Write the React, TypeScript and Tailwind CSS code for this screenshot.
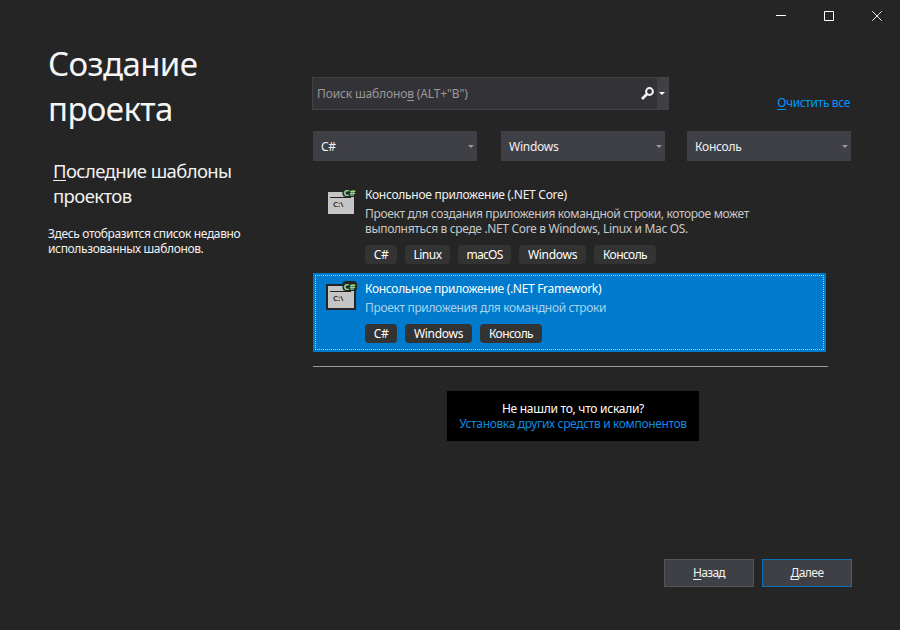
import React from "react";

function Line({ className = "", children }: { className?: string; children: React.ReactNode }) {
  return <div className={`h-[15px] leading-[15px] whitespace-nowrap ${className}`}>{children}</div>;
}

function Key({ children }: { children: React.ReactNode }) {
  return <span className="underline decoration-1 underline-offset-[1.5px]">{children}</span>;
}

function Arrow({ className = "fill-[#999999]" }: { className?: string }) {
  return (
    <svg width="6" height="3" viewBox="0 0 6 3" className={className}>
      <path d="M0 0H6L3 3Z" />
    </svg>
  );
}

function Select({ label, className = "" }: { label: string; className?: string }) {
  return (
    <button className={`flex h-[30px] w-[164px] items-center justify-between bg-[#3f3f46] pr-[3px] pl-2 tracking-[-0.25px] text-[#f1f1f1] ${className}`}>
      <span className="leading-[15px]">{label}</span>
      <Arrow />
    </button>
  );
}

function Tag({ label, className }: { label: string; className: string }) {
  return (
    <span className={`flex h-[19px] items-center justify-center rounded-[4px] leading-[15px] whitespace-nowrap text-white ${className}`}>
      {label}
    </span>
  );
}

function ConsoleIcon({ selected = false }: { selected?: boolean }) {
  return (
    <svg width="32" height="32" viewBox="0 0 32 32">
      {selected && <rect y="4" width="30" height="26" fill="#252526" />}
      <rect x="2" y="6" width="26" height="22" fill="#c5c5c5" />
      <rect x="4" y="11" width="21" height="1" fill="#252526" />
      <rect x="16.5" y="1" width="14.5" height="10" rx="3.5" fill="#252526" />
      <text x="7" y="20.5" fontSize="7.7" fontWeight="600" fontFamily="Noto Sans, sans-serif" fill="#252526" textLength="10.3" lengthAdjust="spacingAndGlyphs">C:\</text>
      <text x="17.5" y="10" fontSize="9.5" fontWeight="800" fontFamily="Noto Sans, sans-serif" fill="#8fd68f" textLength="12" lengthAdjust="spacingAndGlyphs">C#</text>
    </svg>
  );
}

export default function App() {
  return (
    <div className="flex h-[630px] w-[900px] flex-col overflow-hidden bg-[#252526] font-['Noto_Sans','Open_Sans',sans-serif] text-[12px] text-[#f1f1f1]">
      <header className="flex h-8 justify-end">
        <button className="flex w-12 items-center justify-center">
          <svg width="10" height="10" viewBox="0 0 10 10"><path d="M0 4.5H10" stroke="#fff" /></svg>
        </button>
        <button className="flex w-12 items-center justify-center">
          <svg width="10" height="10" viewBox="0 0 10 10"><path d="M.5 .5H9.5V9.5H.5Z" stroke="#fff" fill="none" /></svg>
        </button>
        <button className="flex w-[47px] items-center justify-center pl-px">
          <svg width="10" height="10" viewBox="0 0 10 10"><path d="M.3 .3L9.7 9.7M9.7 .3L.3 9.7" stroke="#e8e8e8" /></svg>
        </button>
      </header>

      <div className="flex flex-1">
        <aside className="w-[312px] pt-[9px] pl-12">
          <h1 className="text-[33px] leading-[45px] tracking-[-0.6px] text-[#f5f5f5]">
            <div>Создание</div>
            <div>проекта</div>
          </h1>
          <h2 className="mt-[27px] ml-[5px] text-[18.5px] leading-[25px] tracking-[-0.6px]">
            <div><Key>П</Key>оследние шаблоны</div>
            <div>проектов</div>
          </h2>
          <div className="mt-[18px] tracking-[-0.36px]">
            <Line>Здесь отобразится список недавно</Line>
            <Line>использованных шаблонов.</Line>
          </div>
        </aside>

        <main className="flex w-[540px] flex-col pt-[45px]">
          <div className="flex h-[33px] justify-between">
            <div className="flex w-[357px] border border-[#434346] bg-[#333337]">
              <div className="flex flex-1 items-center justify-between pr-[3px] pl-1">
                <Line className="tracking-[-0.14px] text-[#999999]">Поиск шаблоно<Key>в</Key> (ALT+"B")</Line>
                <svg width="13" height="13" viewBox="0 0 13 13" fill="none" stroke="#f5f5f5">
                  <circle cx="8.5" cy="4.5" r="3.4" strokeWidth="2" />
                  <path d="M6 7L1 12" strokeWidth="2.6" />
                </svg>
              </div>
              <div className="flex w-[11px] items-center justify-center bg-[#3f3f46] pr-0.5">
                <Arrow className="fill-white" />
              </div>
            </div>
            <Line className="mt-[18px] mr-0.5 tracking-[-0.35px] text-[#0097fb]"><Key>О</Key>чистить все</Line>
          </div>

          <div className="mt-[21px] ml-px flex">
            <Select label="C#" />
            <Select label="Windows" className="ml-6" />
            <Select label="Консоль" className="ml-[22px]" />
          </div>

          <section className="mt-[18px] ml-px flex h-[94px] w-[513px] pt-[7px] pl-[13px]">
            <ConsoleIcon />
            <div className="ml-[7px]">
              <Line className="mt-px tracking-[-0.27px]">Консольное приложение (.NET Core)</Line>
              <Line className="mt-1 tracking-[-0.345px] text-[#c8c8c8]">Проект для создания приложения командной строки, которое может</Line>
              <Line className="tracking-[-0.34px] text-[#c8c8c8]">выполняться в среде .NET Core в Windows, Linux и Mac OS.</Line>
              <div className="mt-[9px] flex gap-2 tracking-[-0.3px]">
                <Tag label="C#" className="w-8 bg-[#333333]" />
                <Tag label="Linux" className="w-[45px] bg-[#333333] tracking-[-0.5px]" />
                <Tag label="macOS" className="w-[53px] bg-[#333333] tracking-[-0.7px]" />
                <Tag label="Windows" className="w-[67px] bg-[#333333]" />
                <Tag label="Консоль" className="w-[62px] bg-[#333333] tracking-[-0.6px]" />
              </div>
            </div>
          </section>

          <section className="ml-px h-[79px] w-[513px] bg-[#007acc] p-[2px]">
            <div className="flex h-full border border-dotted border-[#a5d3f2] pt-[4px] pl-[10px]">
              <ConsoleIcon selected />
              <div className="ml-[7px]">
                <Line className="mt-px tracking-[-0.31px] text-white">Консольное приложение (.NET Framework)</Line>
                <Line className="mt-1 tracking-[-0.35px] text-[#a9d2ef]">Проект приложения для командной строки</Line>
                <div className="mt-[9px] flex gap-2 tracking-[-0.3px]">
                  <Tag label="C#" className="w-8 bg-[#333333]" />
                  <Tag label="Windows" className="w-[67px] bg-[#333333]" />
                  <Tag label="Консоль" className="w-[62px] bg-[#333333] tracking-[-0.6px]" />
                </div>
              </div>
            </div>
          </section>

          <div className="mt-[14px] ml-px h-px w-[515px] bg-[#999999]" />

          <div className="mt-6 ml-[135px] flex h-[50px] w-[252px] flex-col items-center bg-black pt-[10px]">
            <Line className="tracking-[-0.27px] text-white">Не нашли то, что искали?</Line>
            <Line className="tracking-[-0.35px] text-[#0e8be0]">Установка других средств и компонентов</Line>
          </div>

          <div className="mt-[118px] flex justify-end gap-2">
            <button className="h-7 w-[90px] border border-[#555555] bg-[#3f3f46] tracking-[-0.7px]"><Key>Н</Key>азад</button>
            <button className="h-7 w-[90px] border border-[#0e70b5] bg-[#3f3f46] tracking-[-0.5px]"><Key>Д</Key>алее</button>
          </div>
        </main>
      </div>
    </div>
  );
}
